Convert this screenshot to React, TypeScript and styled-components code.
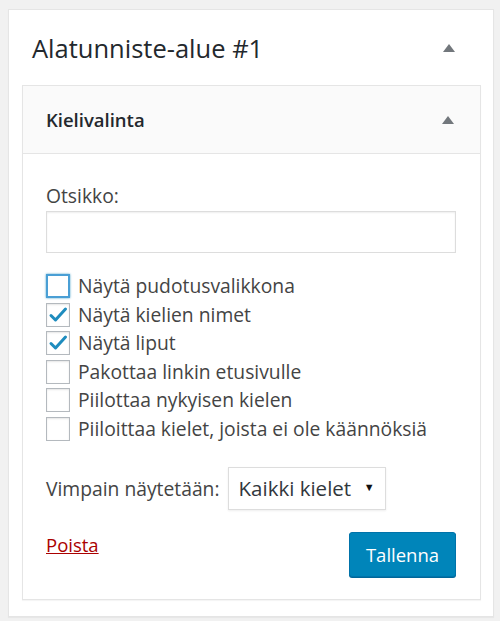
import React from "react";
import styled, { createGlobalStyle } from "styled-components";

const GlobalStyle = createGlobalStyle`
  body {
    margin: 0;
    background: #f1f1f1;
    font-family: "Open Sans", "Noto Sans", "Liberation Sans", sans-serif;
    color: #444;
  }
`;

const Page = styled.div`
  padding: 9px 6px 4px 8px;
`;

const Sidebar = styled.div`
  background: #fff;
  border: 1px solid #e5e5e5;
  box-shadow: 0 1px 1px rgba(0, 0, 0, 0.04);
`;

const SidebarHeader = styled.div`
  display: flex;
  align-items: center;
  justify-content: space-between;
  height: 75px;
  padding: 0 38px 0 23px;
`;

const SidebarTitle = styled.h2`
  margin: 0;
  font-size: 25.5px;
  font-weight: 400;
  color: #23282d;
`;

const Arrow = styled.span`
  width: 0;
  height: 0;
  border-left: 6px solid transparent;
  border-right: 6px solid transparent;
  border-bottom: 8px solid #72777c;
`;

const Widget = styled.div`
  margin: 0 12px 16px 13px;
  border: 1px solid #e5e5e5;
  box-shadow: 0 1px 1px rgba(0, 0, 0, 0.04);
  background: #fff;
`;

const WidgetHeader = styled.div`
  display: flex;
  align-items: center;
  justify-content: space-between;
  height: 67px;
  padding: 0 26px 0 23px;
  background: #fafafa;
  border-bottom: 1px solid #e5e5e5;
`;

const WidgetTitle = styled.h3`
  margin: 0;
  font-size: 18.5px;
  font-weight: 600;
  color: #23282d;
`;

const WidgetBody = styled.div`
  padding: 30px 24px 22px 23px;
`;

const Label = styled.label`
  display: block;
  font-size: 19.3px;
  line-height: 24px;
  margin-bottom: 3px;
`;

const TextInput = styled.input`
  display: block;
  box-sizing: border-box;
  width: 100%;
  height: 42px;
  border: 1px solid #ddd;
  box-shadow: inset 0 1px 2px rgba(0, 0, 0, 0.07);
  margin: 0 0 21px;
`;

const Options = styled.div`
  display: flex;
  flex-direction: column;
  gap: 4.6px;
`;

const OptionRow = styled.label`
  display: flex;
  align-items: center;
  gap: 8px;
  height: 24px;
  font-size: 19.3px;
  line-height: 24px;
`;

const Box = styled.span<{ $focus?: boolean }>`
  box-sizing: border-box;
  width: 24px;
  height: 24px;
  flex: none;
  display: flex;
  align-items: center;
  justify-content: center;
  border: ${(p) => (p.$focus ? "2px solid #4a9fd5" : "1px solid #b4b9be")};
  box-shadow: ${(p) => (p.$focus ? "0 0 2px rgba(30, 140, 190, 0.8)" : "inset 0 1px 2px rgba(0, 0, 0, 0.1)")};
  background: #fff;
`;

const ShowRow = styled.div`
  display: flex;
  align-items: center;
  gap: 8px;
  margin-top: 26px;
  font-size: 19.3px;
`;

const SelectBox = styled.div`
  box-sizing: border-box;
  display: flex;
  align-items: center;
  justify-content: space-between;
  width: 158px;
  height: 43px;
  padding: 0 10px 0 10px;
  border: 1px solid #ddd;
  box-shadow: 0 1px 2px rgba(0, 0, 0, 0.07);
  color: #32373c;
  font-size: 20.5px;
`;

const Caret = styled.span`
  font-size: 11px;
  color: #111;
  margin-top: -4px;
`;

const Actions = styled.div`
  display: flex;
  align-items: center;
  justify-content: space-between;
  margin-top: 22px;
`;

const DeleteLink = styled.a`
  color: #a00;
  font-size: 18.5px;
  text-decoration: underline;
  margin-top: -20px;
  cursor: pointer;
`;

const SaveButton = styled.button`
  box-sizing: border-box;
  width: 107px;
  height: 45px;
  background: #0085ba;
  border: 1px solid #0073aa;
  border-radius: 3px;
  box-shadow: 0 1px 0 #006799;
  color: #fff;
  font-family: inherit;
  font-size: 18.5px;
`;

const Check = () => (
  <svg width="20" height="20" viewBox="0 0 20 20">
    <path d="M3 10.5 L7.5 15 L17.5 4" fill="none" stroke="#1e8cbe" strokeWidth="3" strokeLinecap="round" strokeLinejoin="round" />
  </svg>
);

const options = [
  { text: "Näytä pudotusvalikkona", checked: false, focus: true },
  { text: "Näytä kielien nimet", checked: true },
  { text: "Näytä liput", checked: true },
  { text: "Pakottaa linkin etusivulle", checked: false },
  { text: "Piilottaa nykyisen kielen", checked: false },
  { text: "Piiloittaa kielet, joista ei ole käännöksiä", checked: false },
];

export default function App() {
  return (
    <Page>
      <GlobalStyle />
      <Sidebar>
        <SidebarHeader>
          <SidebarTitle>Alatunniste-alue #1</SidebarTitle>
          <Arrow />
        </SidebarHeader>
        <Widget>
          <WidgetHeader>
            <WidgetTitle>Kielivalinta</WidgetTitle>
            <Arrow />
          </WidgetHeader>
          <WidgetBody>
            <Label>Otsikko:</Label>
            <TextInput type="text" />
            <Options>
              {options.map((o) => (
                <OptionRow key={o.text}>
                  <Box $focus={o.focus}>{o.checked && <Check />}</Box>
                  {o.text}
                </OptionRow>
              ))}
            </Options>
            <ShowRow>
              Vimpain näytetään:
              <SelectBox>
                Kaikki kielet
                <Caret>▼</Caret>
              </SelectBox>
            </ShowRow>
            <Actions>
              <DeleteLink>Poista</DeleteLink>
              <SaveButton>Tallenna</SaveButton>
            </Actions>
          </WidgetBody>
        </Widget>
      </Sidebar>
    </Page>
  );
}
